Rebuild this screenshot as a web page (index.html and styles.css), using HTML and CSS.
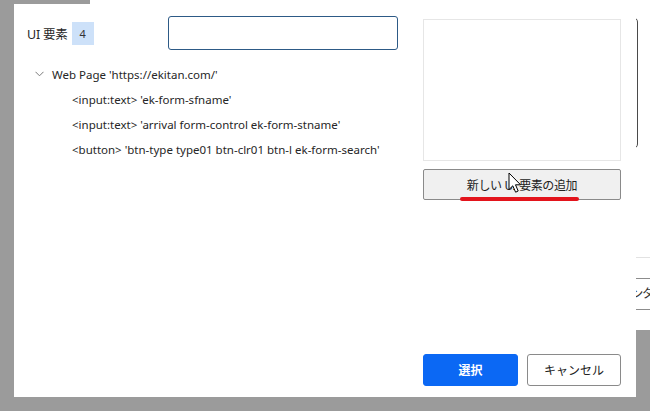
FILE: index.html
```html
<!DOCTYPE html>
<html lang="ja">
<head>
<meta charset="utf-8">
<title>UI 要素</title>
<link rel="stylesheet" href="styles.css">
</head>
<body>
<div class="desktop">
  <div class="back-window">
    <div class="back-panel"></div>
    <div class="back-sep"></div>
    <div class="back-field"><span>カウンター</span></div>
  </div>

  <div class="dialog">
    <div class="dialog-body">
      <div class="left-col">
        <div class="head-row">
          <span class="label">UI 要素</span>
          <span class="badge">4</span>
          <input class="search" type="text" value="">
        </div>
        <ul class="tree">
          <li class="tree-root">
            <svg class="chev" width="9" height="6" viewBox="0 0 9 6"><path d="M0.5 0.8 L4.5 4.8 L8.5 0.8" fill="none" stroke="#7a7a7a" stroke-width="1"/></svg>
            <span>Web Page 'https://ekitan.com/'</span>
          </li>
          <li class="tree-item">&lt;input:text&gt; 'ek-form-sfname'</li>
          <li class="tree-item">&lt;input:text&gt; 'arrival form-control ek-form-stname'</li>
          <li class="tree-item">&lt;button&gt; 'btn-type type01 btn-clr01 btn-l ek-form-search'</li>
        </ul>
      </div>
      <div class="right-col">
        <div class="preview"></div>
        <button class="add-btn">新しい UI 要素の追加</button>
      </div>
    </div>
    <div class="footer">
      <button class="btn primary">選択</button>
      <button class="btn secondary">キャンセル</button>
    </div>
    <div class="mark"></div>
    <svg class="cursor" width="14" height="22" viewBox="0 0 14 22"><path d="M1 1 L1 17.5 L4.8 13.8 L7.6 20.2 L10.2 19 L7.5 12.8 L12.6 12.8 Z" fill="#fff" stroke="#000" stroke-width="1" stroke-linejoin="miter"/></svg>
  </div>
</div>
</body>
</html>
```

FILE: styles.css
```css
* { box-sizing: border-box; }
html, body { margin: 0; padding: 0; }
body {
  width: 650px;
  height: 411px;
  overflow: hidden;
  background: #9b9b9b;
  font-family: "Noto Sans", "Noto Sans CJK JP", sans-serif;
  font-feature-settings: "palt";
  color: #262626;
}
.desktop {
  position: relative;
  width: 650px;
  height: 411px;
  overflow: hidden;
}
.back-window {
  position: absolute;
  left: 90px;
  top: -20px;
  width: 560px;
  height: 350px;
  background: #fff;
  overflow: hidden;
}
.back-panel {
  position: absolute;
  left: 400px;
  top: 37px;
  width: 148px;
  height: 132px;
  border: 1.5px solid #4a4a4a;
  border-radius: 5px;
}
.back-sep {
  position: absolute;
  left: 500px;
  top: 277px;
  width: 60px;
  border-top: 1px solid #e2e2e2;
}
.back-field {
  position: absolute;
  left: 500px;
  top: 298px;
  width: 60px;
  height: 32px;
  border-top: 1px solid #8c8c8c;
  border-bottom: 1px solid #8c8c8c;
  font-size: 12px;
  line-height: 30px;
  padding-left: 20px;
  color: #333;
  white-space: nowrap;
  overflow: hidden;
}
.dialog {
  position: absolute;
  left: 14px;
  top: 4px;
  width: 622px;
  height: 393px;
  background: #fff;
  display: flex;
  flex-direction: column;
  padding: 12px 15px 11px 13px;
}
.dialog-body {
  display: flex;
  gap: 25px;
}
.left-col {
  width: 371px;
}
.head-row {
  display: flex;
  align-items: center;
  height: 34px;
}
.label {
  font-size: 12.5px;
  color: #262626;
  letter-spacing: -0.2px;
}
.badge {
  margin-left: 4px;
  width: 22px;
  height: 23px;
  background: #cde1f9;
  font-size: 11px;
  line-height: 23px;
  text-align: center;
  color: #333;
}
.search {
  margin-left: auto;
  width: 230px;
  height: 34px;
  border: 1px solid #2d5a86;
  border-radius: 3px;
  outline: none;
  background: #fff;
}
.tree {
  list-style: none;
  margin: 11px 0 0;
  padding: 0;
  font-size: 11.5px;
  color: #262626;
}
.tree-root {
  display: flex;
  align-items: center;
  height: 26px;
  padding-left: 8px;
}
.chev {
  margin-right: 8px;
}
.tree-item {
  height: 25px;
  line-height: 25px;
  padding-left: 45px;
  white-space: nowrap;
}
.right-col {
  width: 198px;
  display: flex;
  flex-direction: column;
  padding-top: 3px;
}
.preview {
  height: 142px;
  border: 1px solid #e6e6e6;
}
.add-btn {
  margin-top: 8px;
  height: 31px;
  background: #f0f0f0;
  border: 1px solid #8a8a8a;
  border-radius: 2px;
  font-family: inherit;
  font-size: 12px;
  letter-spacing: -0.4px;
  color: #222;
  padding: 0;
}
.footer {
  margin-top: auto;
  display: flex;
  justify-content: flex-end;
  gap: 9px;
}
.btn {
  width: 95px;
  height: 32px;
  border-radius: 3px;
  font-family: inherit;
  font-size: 12px;
  padding: 0;
}
.btn.primary {
  background: #0b68f4;
  border: 1px solid #0b68f4;
  color: #fff;
  font-weight: 700;
}
.btn.secondary {
  width: 94px;
  background: #fff;
  border: 1px solid #8a8a8a;
  color: #222;
}
.mark {
  position: absolute;
  left: 446px;
  top: 193px;
  width: 119px;
  height: 4px;
  background: #e3141c;
  border-radius: 2px;
}
.cursor {
  position: absolute;
  left: 494px;
  top: 168px;
}
```
